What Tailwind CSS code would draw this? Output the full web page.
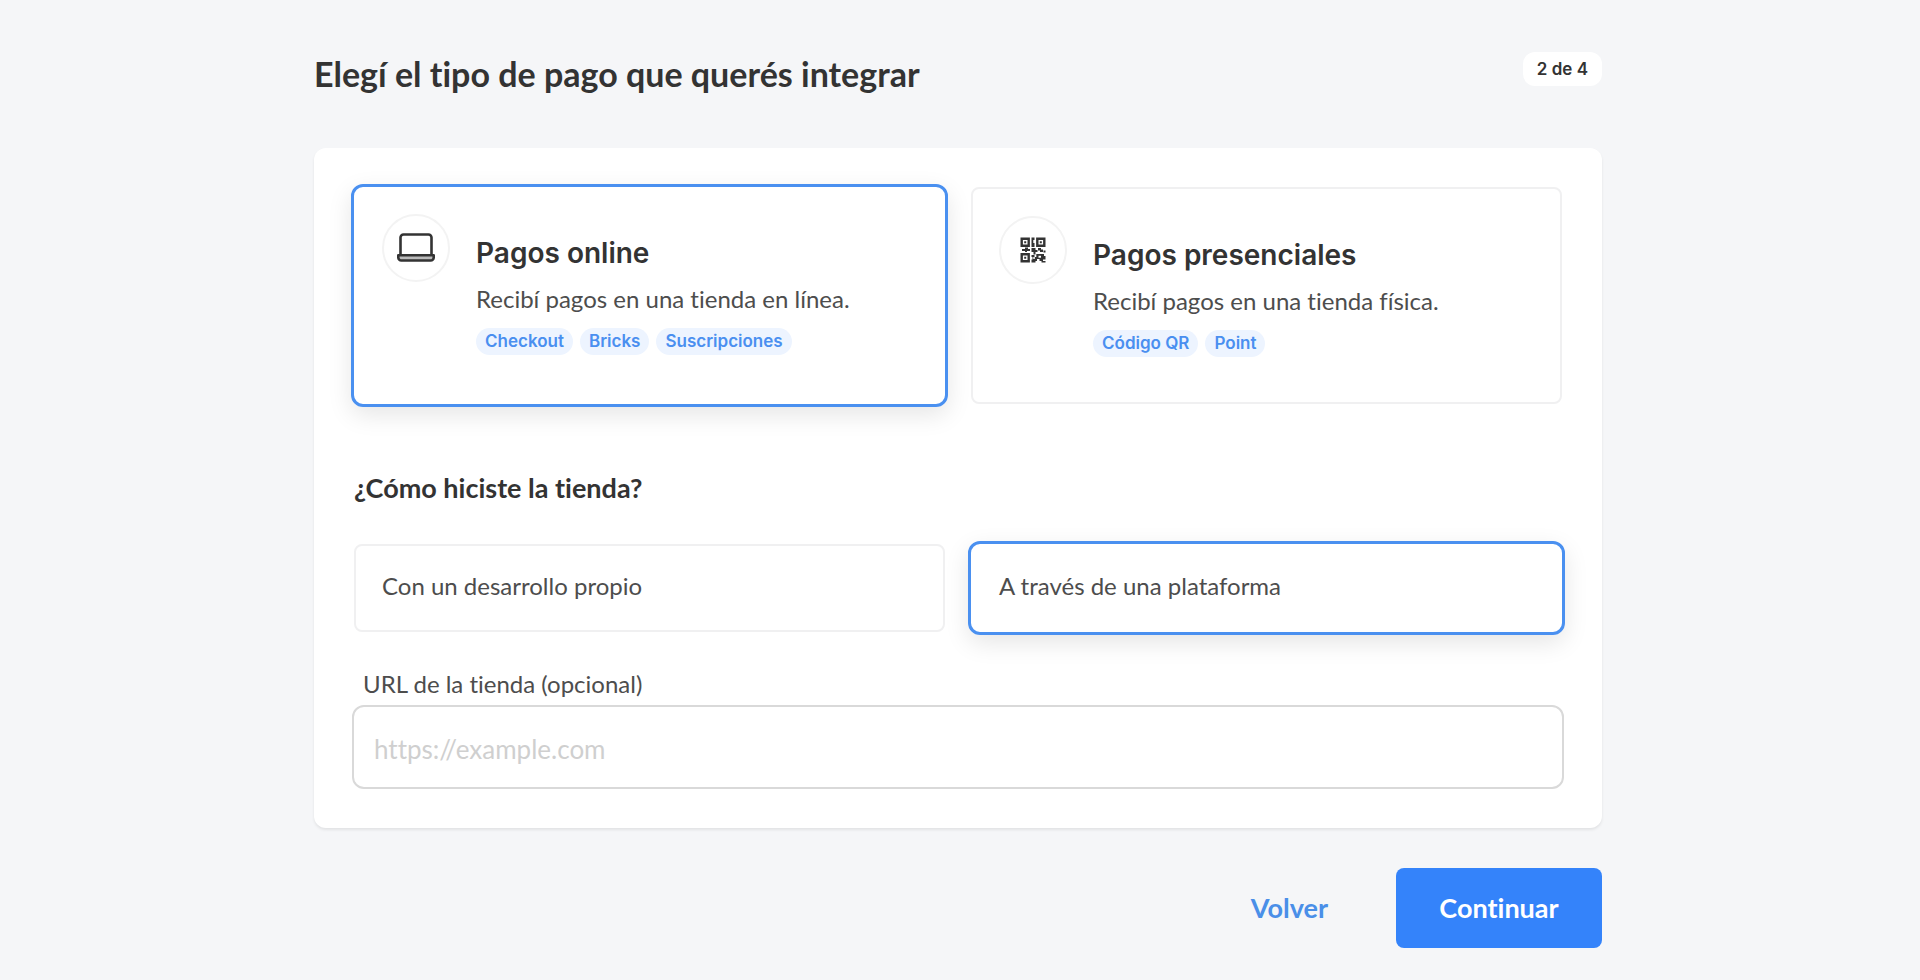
<!DOCTYPE html>
<html lang="es">

<head>
  <meta charset="UTF-8">
  <meta name="viewport" content="width=device-width, initial-scale=1.0">
  <title>Integrar pagos</title>
  <script src="https://cdn.jsdelivr.net/npm/@tailwindcss/browser@4"></script>
</head>

<body class="bg-[#f5f6f8] font-['Lato',sans-serif] text-[#333] [font-variant-ligatures:none]">
  <form class="max-w-[1336px] mx-auto pl-[22px] pr-[26px] pt-[52px] pb-7">
    <!-- Encabezado -->
    <header class="flex justify-between items-start mb-[52px]">
      <h1 class="text-[34px] leading-[44px] font-bold">Elegí el tipo de pago que querés integrar</h1>
      <span class="rounded-xl bg-white px-[14px] font-['Inter',sans-serif] text-[17px] leading-[34px] font-semibold">2 de 4</span>
    </header>

    <main class="rounded-xl bg-white px-10 py-[39px] shadow-[0_2px_3px_rgba(0,0,0,0.08)]">
      <!-- Tipo de pago -->
      <div role="radiogroup" aria-label="Tipo de pago" class="grid grid-cols-2 gap-[26px]">
        <label class="relative flex gap-[26px] min-h-[217px] rounded-lg border-2 border-[#f0f0f1] px-[26px] py-[27px] has-checked:-m-[3px] has-checked:rounded-xl has-checked:border-3 has-checked:border-[#4a90f0] has-checked:px-7 has-checked:shadow-[0_8px_24px_rgba(0,0,0,0.1)]">
          <input type="radio" name="tipo" class="sr-only" checked>
          <span class="flex shrink-0 justify-center items-center size-[68px] rounded-full border-2 border-[#f3f3f3]">
            <svg class="w-10 h-8" viewBox="0 0 40 32" fill="none" stroke="#333" stroke-width="2.6" stroke-linejoin="round">
              <path d="M4.5 23V5.5a3 3 0 0 1 3-3h25a3 3 0 0 1 3 3V23" />
              <path d="M2.3 23.3h35.4v2.2a3 3 0 0 1-3 3H5.3a3 3 0 0 1-3-3z" fill="#bbb" />
            </svg>
          </span>
          <span class="flex flex-col pt-[19px]">
            <span class="font-['Inter',sans-serif] text-[28px] leading-10 font-semibold">Pagos online</span>
            <span class="mt-[10px] text-[24px] leading-8 text-[#4d4d4d]">Recibí pagos en una tienda en línea.</span>
            <span class="flex gap-[7px] mt-[13px] font-['Inter',sans-serif] text-[17px] leading-[27px] font-semibold text-[#4a8ff0]">
              <span class="rounded-full bg-[#edf4ff] px-[9px]">Checkout</span>
              <span class="rounded-full bg-[#edf4ff] px-[9px]">Bricks</span>
              <span class="rounded-full bg-[#edf4ff] px-[9px]">Suscripciones</span>
            </span>
          </span>
        </label>
        <label class="relative flex gap-[26px] min-h-[217px] rounded-lg border-2 border-[#f0f0f1] px-[26px] py-[27px] has-checked:-m-[3px] has-checked:rounded-xl has-checked:border-3 has-checked:border-[#4a90f0] has-checked:px-7 has-checked:shadow-[0_8px_24px_rgba(0,0,0,0.1)]">
          <input type="radio" name="tipo" class="sr-only">
          <span class="flex shrink-0 justify-center items-center size-[68px] rounded-full border-2 border-[#f3f3f3]">
            <svg class="size-[26px]" viewBox="0 0 26 26" fill="#333">
              <g fill="none" stroke="#333" stroke-width="2.4">
                <path d="M1.7 1.7h7v7h-7zM17.3 1.7h7v7h-7zM1.7 17.3h7v7h-7z" />
              </g>
              <path d="M4.2 4.2h2v2h-2zM19.8 4.2h2v2h-2zM4.2 19.8h2v2h-2z" />
              <path d="M11.5 0.5h3v2.5h-1.2v3h1.2v4h-3zM2 12h3v-1.5h3V12h2v2H7v1H5v-1H2zM11.5 11h4v2h2v2h-2v2.5h-2V15h-2zM18 11h3v1.5h2V15h-3v-1.5h-2zM23.5 13.5h2v2h-2zM11.5 18h3v2h-1.2v2h1.5v-2h1.5v-3H24v2h1.5v3.5H23V24h2.5v1.5h-4V24h-2v-2H17v2h-1.5v1.5h-4v-3h1V20h-1zM18.5 18.7v2h2.5v-2z" fill-rule="evenodd" />
            </svg>
          </span>
          <span class="flex flex-col pt-[19px]">
            <span class="font-['Inter',sans-serif] text-[28px] leading-10 font-semibold">Pagos presenciales</span>
            <span class="mt-[10px] text-[24px] leading-8 text-[#4d4d4d]">Recibí pagos en una tienda física.</span>
            <span class="flex gap-[7px] mt-[13px] font-['Inter',sans-serif] text-[17px] leading-[27px] font-semibold text-[#4a8ff0]">
              <span class="rounded-full bg-[#edf4ff] px-[9px]">Código QR</span>
              <span class="rounded-full bg-[#edf4ff] px-[9px]">Point</span>
            </span>
          </span>
        </label>
      </div>

      <!-- Origen de la tienda -->
      <h2 id="origen" class="mt-[66px] text-[27px] leading-9 font-bold">¿Cómo hiciste la tienda?</h2>
      <div role="radiogroup" aria-labelledby="origen" class="grid grid-cols-2 gap-[26px] mt-[38px]">
        <label class="relative flex items-center h-[88px] rounded-lg border-2 border-[#f0f0f1] px-[26px] pb-1 text-[24px] leading-8 text-[#4d4d4d] has-checked:-m-[3px] has-checked:h-[94px] has-checked:rounded-xl has-checked:border-3 has-checked:border-[#4a90f0] has-checked:px-7 has-checked:shadow-[0_8px_24px_rgba(0,0,0,0.1)]">
          <input type="radio" name="origen" class="sr-only">
          Con un desarrollo propio
        </label>
        <label class="relative flex items-center h-[88px] rounded-lg border-2 border-[#f0f0f1] px-[26px] pb-1 text-[24px] leading-8 text-[#4d4d4d] has-checked:-m-[3px] has-checked:h-[94px] has-checked:rounded-xl has-checked:border-3 has-checked:border-[#4a90f0] has-checked:px-7 has-checked:shadow-[0_8px_24px_rgba(0,0,0,0.1)]">
          <input type="radio" name="origen" class="sr-only" checked>
          A través de una plataforma
        </label>
      </div>

      <!-- URL -->
      <div class="-mx-[2px] mt-9">
        <label for="url" class="block px-[11px] text-[24px] leading-8 text-[#4d4d4d]">URL de la tienda (opcional)</label>
        <input id="url" type="url" placeholder="https://example.com" class="w-full h-[84px] mt-[5px] rounded-xl border-2 border-[#d9d9d9] px-5 pt-1 text-[26px] placeholder:text-[#cfcfcf] focus:outline-none focus:border-[#4a90f0]">
      </div>
    </main>

    <!-- Acciones -->
    <footer class="flex justify-end gap-8 mt-10">
      <button type="button" class="h-20 px-9 rounded-lg text-[27px] font-bold text-[#4a8fe8]">Volver</button>
      <button type="submit" class="w-[206px] h-20 rounded-lg bg-[#3483fa] text-[27px] font-bold text-white hover:bg-[#2968c8]">Continuar</button>
    </footer>
  </form>
</body>

</html>
